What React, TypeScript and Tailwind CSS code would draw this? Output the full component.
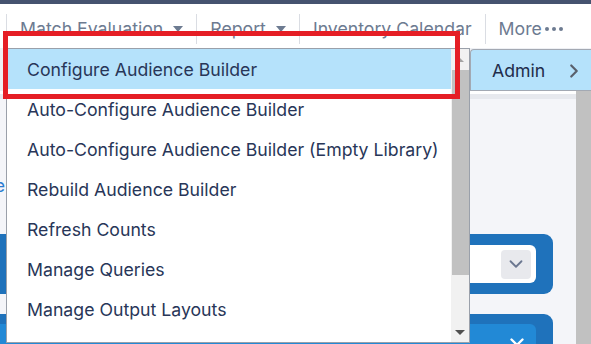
import { ChevronDown, ChevronRight, X } from "lucide-react";

const navItems = [
  { label: "Match Evaluation", caret: true },
  { label: "Report", caret: true },
  { label: "Inventory Calendar", caret: false },
];

const menuItems = [
  "Configure Audience Builder",
  "Auto-Configure Audience Builder",
  "Auto-Configure Audience Builder (Empty Library)",
  "Rebuild Audience Builder",
  "Refresh Counts",
  "Manage Queries",
  "Manage Output Layouts",
  "Manage Output Templates",
];

const Caret = () => (
  <svg width="10" height="6" viewBox="0 0 10 6" className="shrink-0">
    <path d="M0 0h10L5 6z" fill="currentColor" />
  </svg>
);

const App = () => {
  return (
    <div className="relative h-[344px] w-[591px] overflow-hidden bg-white font-['Inter','Noto_Sans',sans-serif] text-[17.7px]">
      <div className="h-[4px] bg-[#45536f]" />

      {/* top nav */}
      <nav className="flex h-[44px] items-start pl-[6px] pt-[10px] text-[#6d7b91]">
        {navItems.map((item) => (
          <div
            key={item.label}
            className="flex h-[30px] items-center gap-[10px] border-l border-[#dadde3] px-[13px]"
          >
            <span>{item.label}</span>
            {item.caret && <Caret />}
          </div>
        ))}
        <div className="flex h-[30px] items-center gap-[3px] border-l border-[#dadde3] px-[13px]">
          <span>More</span>
          <span className="flex gap-[3px]">
            <span className="h-[4px] w-[4px] rounded-full bg-[#6d7b91]" />
            <span className="h-[4px] w-[4px] rounded-full bg-[#6d7b91]" />
            <span className="h-[4px] w-[4px] rounded-full bg-[#6d7b91]" />
          </span>
        </div>
      </nav>

      {/* page behind the menu */}
      <div className="flex h-[296px] flex-col bg-[#eef0f4]">
        <div className="flex h-[43px] shrink-0 justify-end pt-[1px]">
          <div className="flex w-[121px] items-center justify-between rounded-tl-[4px] border-l border-t border-b border-[#a3a9b3] bg-[#b5e2fb] pl-[21px] pr-[6px] pt-[2px] text-[#1f2d4b]">
            <span>Admin</span>
            <ChevronRight size={22} strokeWidth={2.4} className="text-[#59606c]" />
          </div>
        </div>
        <div className="flex flex-1">
          <div className="flex flex-1 flex-col bg-[#f4f5f9]">
            <div className="h-[8px] border-t-[3px] border-white bg-[#e7e9ee]" />
            <div className="h-[135px] pt-[74px]">
              <div className="flex w-[5px] justify-end overflow-hidden whitespace-nowrap text-[#2a7bd0]">
                Manage Template
              </div>
            </div>
            <div className="mr-[23px] flex h-[60px] items-center justify-end rounded-r-[9px] bg-[#1f72bb] pr-[17px]">
              <div className="flex h-[38px] w-[300px] items-center justify-end rounded-r-[6px] bg-white pr-[5px]">
                <div className="flex h-[29px] w-[30px] items-center justify-center rounded-[4px] bg-[#e8e9ed]">
                  <ChevronDown size={22} strokeWidth={2} className="text-[#6b7790]" />
                </div>
              </div>
            </div>
            <div className="h-[20px] shrink-0" />
            <div className="mr-[23px] flex flex-1 flex-col rounded-tr-[9px] bg-[#1f72bb] pr-[17px] pt-[10px]">
              <div className="flex flex-1 justify-end rounded-tr-[6px] bg-[#2289d6] pr-[8px] pt-[10px]">
                <X size={22} strokeWidth={2.6} className="text-white" />
              </div>
            </div>
          </div>
          <div className="w-[15px] bg-[#c1c1c1]" />
        </div>
      </div>

      {/* dropdown menu */}
      <div className="absolute left-[6px] top-[48px] flex h-[295px] w-[464px] border border-[#9aa0aa] bg-white">
        <ul className="flex-1 overflow-hidden text-[#283658]">
          {menuItems.map((item, i) => (
            <li
              key={item}
              className={`flex h-[40px] shrink-0 items-center pl-[20px] pt-[3px] ${
                i === 0 ? "bg-[#b5e2fb]" : ""
              }`}
            >
              {item}
            </li>
          ))}
        </ul>
        <div className="flex w-[18px] flex-col items-center bg-[#f1f1f1]">
          <div className="flex h-[21px] items-center">
            <svg width="8" height="4" viewBox="0 0 8 4">
              <path d="M0 4h8L4 0z" fill="#a3a3a3" />
            </svg>
          </div>
          <div className="h-[205px] w-[17px] bg-[#c1c1c1]" />
          <div className="flex flex-1 items-end pb-[7px]">
            <svg width="10" height="5" viewBox="0 0 10 5">
              <path d="M0 0h10L5 5z" fill="#505050" />
            </svg>
          </div>
        </div>
      </div>

      {/* highlight annotation */}
      <div className="absolute left-[3px] top-[31px] h-[68px] w-[457px] border-[5px] border-[#e51e25]" />
    </div>
  );
};

export default App;
